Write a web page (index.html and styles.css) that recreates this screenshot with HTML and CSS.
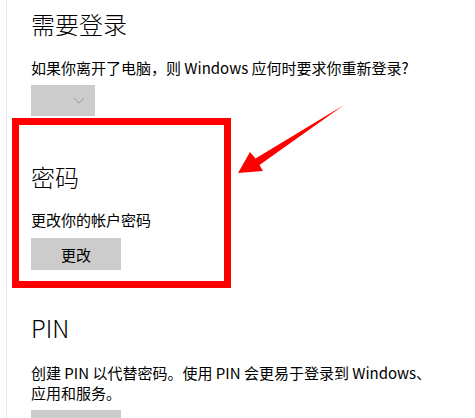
FILE: index.html
```html
<!DOCTYPE html>
<html lang="zh-CN">

<head>
    <meta charset="UTF-8">
    <title>登录选项</title>
    <link rel="stylesheet" href="styles.css">
</head>

<body>
    <div class="pane">
        <div class="section">
            <div class="section-title">需要登录</div>
            <div class="section-desc">如果你离开了电脑，则 Windows 应何时要求你重新登录?</div>
            <div class="dropdown">
                <svg class="chevron" width="12" height="7" viewBox="0 0 12 7">
                    <polyline points="1,1 6,6 11,1" fill="none" stroke="#9a9a9a" stroke-width="1"/>
                </svg>
            </div>
        </div>

        <div class="section highlight">
            <div class="section-title">密码</div>
            <div class="section-desc">更改你的帐户密码</div>
            <button class="gray-button">更改</button>
        </div>

        <div class="section pin">
            <div class="section-title">PIN</div>
            <div class="section-desc wrap">创建 PIN 以代替密码。使用 PIN 会更易于登录到 Windows、应用和服务。</div>
            <button class="gray-button"></button>
        </div>
    </div>

    <!-- red annotation arrow -->
    <svg class="arrow" width="120" height="80" viewBox="230 100 120 80">
        <polygon points="238,173 250,152 255.5,158.5 344,105 259.5,165 263,171" fill="#ff0000"/>
    </svg>
</body>

</html>
```

FILE: styles.css
```css
body,
html {
    margin: 0;
    padding: 0;
    background: #ffffff;
    font-family: "Noto Sans CJK SC", "Noto Sans", sans-serif;
    color: #000000;
    overflow: hidden;
}

.pane {
    position: relative;
    box-sizing: border-box;
    height: 100vh;
    margin-left: 6px;
    border-left: 1px solid #ebebeb;
    padding-left: 24px;
    padding-top: 8px;
    overflow: hidden;
}

/* scroll indicator */
.pane::before {
    content: "";
    position: absolute;
    left: -1px;
    top: 37px;
    width: 1px;
    height: 46px;
    background: #9ee09e;
}

.section-title {
    font-size: 24px;
    line-height: 32px;
    font-weight: 300;
}

.section-desc {
    font-size: 15px;
    line-height: 20px;
    margin-top: 18px;
}

.dropdown {
    position: relative;
    width: 64px;
    height: 31px;
    margin-top: 7px;
    background: #cccccc;
}

.chevron {
    position: absolute;
    left: 42px;
    top: 12px;
}

.highlight {
    box-sizing: border-box;
    width: 219px;
    margin-left: -19px;
    margin-top: 2px;
    border: 7px solid #ff0000;
    padding: 36px 0 11px 12px;
}

.highlight .section-desc {
    margin-top: 17px;
}

.gray-button {
    display: block;
    width: 90px;
    height: 32px;
    margin-top: 8px;
    border: none;
    padding: 0;
    background: #cccccc;
    font-family: inherit;
    font-size: 15px;
    color: #000000;
}

.pin {
    margin-top: 24px;
}

.pin .section-desc {
    margin-top: 19px;
}

.wrap {
    width: 414px;
}

.pin .gray-button {
    margin-top: 7px;
}

.arrow {
    position: absolute;
    left: 230px;
    top: 100px;
}
```
